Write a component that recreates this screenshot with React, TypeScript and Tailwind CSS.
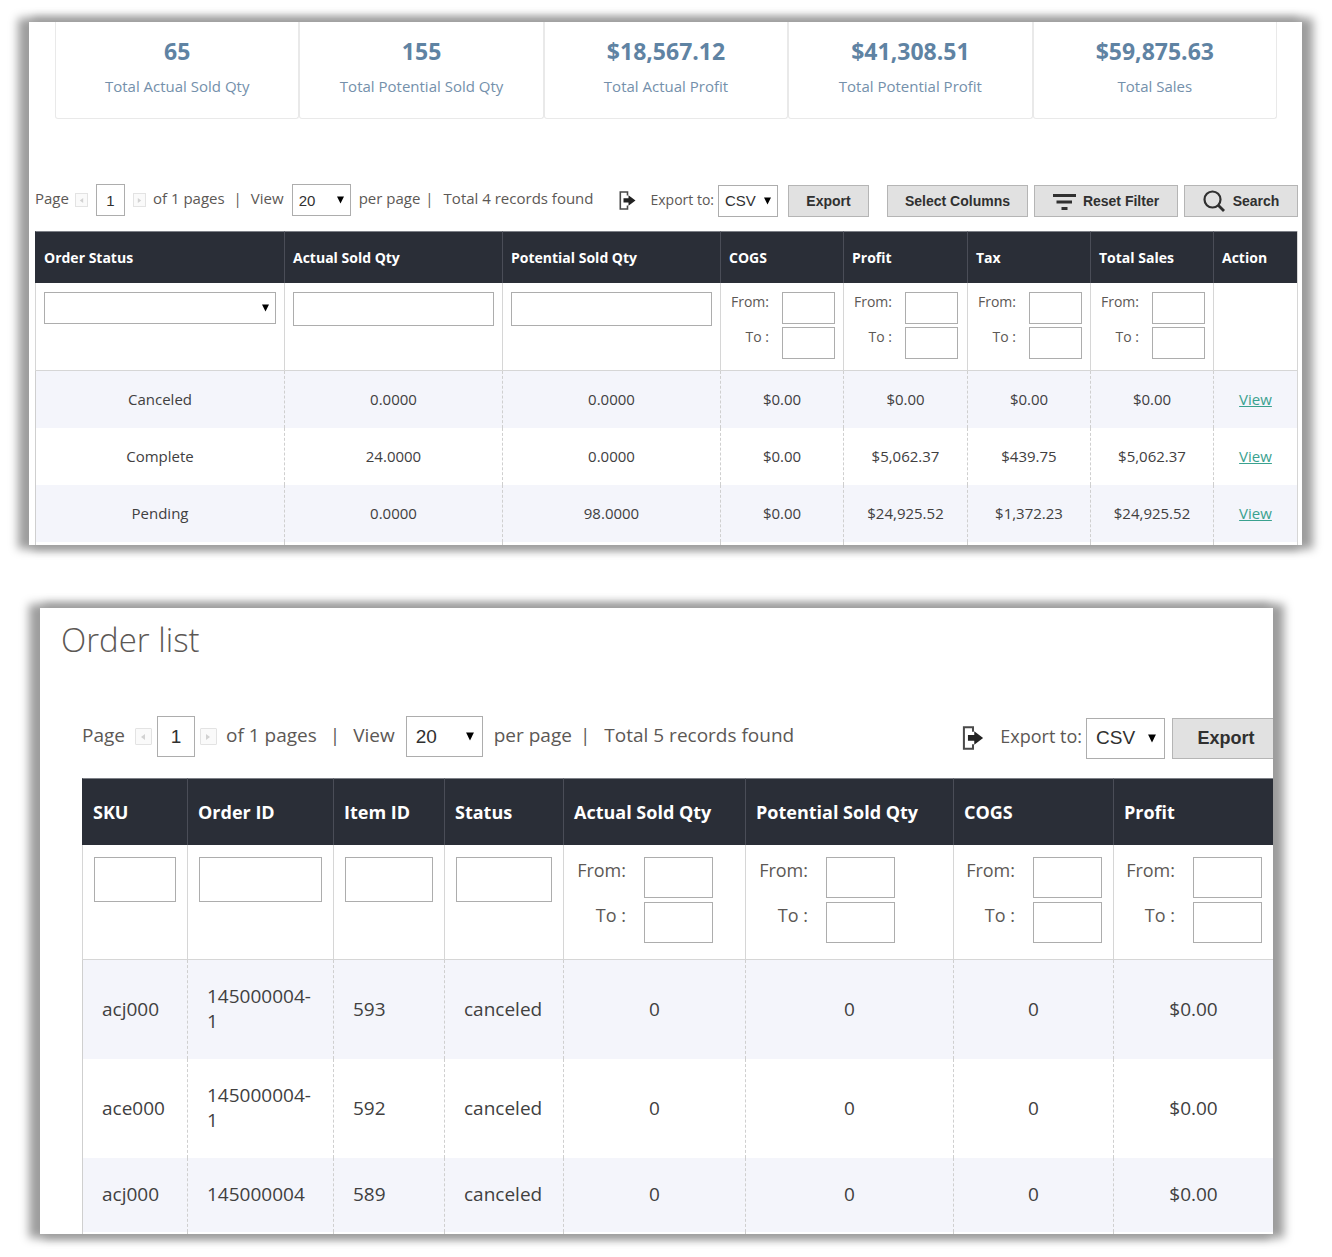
import React from "react";

type Size = "sm" | "lg";

const OPEN = "font-['Open_Sans',sans-serif]";
const ARIAL = "font-['Liberation_Sans',Arial,sans-serif]";
const PANEL =
  "overflow-hidden bg-white shadow-[-7px_0_9px_4px_#9d9d9d,7px_0_9px_4px_#9d9d9d]";

function Arrow({ size }: { size: Size }) {
  return (
    <svg
      viewBox="0 0 7 8"
      aria-hidden="true"
      className={
        size === "sm"
          ? "pointer-events-none absolute top-3 right-[7px] h-2 w-[7px]"
          : "pointer-events-none absolute top-4 right-[9px] h-[9px] w-2"
      }
    >
      <path d="M0 0.5h7L3.5 7.5z" fill="#000" />
    </svg>
  );
}

function Select({
  size,
  id,
  label,
  options,
  width,
}: {
  size: Size;
  id: string;
  label?: string;
  options: string[];
  width: string;
}) {
  return (
    <span className={`relative block ${width}`}>
      <select
        id={id}
        aria-label={label}
        className={`block w-full appearance-none border border-[#adadad] bg-white text-[#303030] ${ARIAL} ${
          size === "sm" ? "h-8 pl-1.5 text-[15px]" : "h-[41px] pl-[9px] text-[19px]"
        }`}
      >
        {options.map((o) => (
          <option key={o}>{o}</option>
        ))}
      </select>
      <Arrow size={size} />
    </span>
  );
}

function PagerButton({ size, dir }: { size: Size; dir: "prev" | "next" }) {
  return (
    <button
      type="button"
      aria-label={dir === "prev" ? "Previous page" : "Next page"}
      className={`grid shrink-0 place-items-center self-center border border-[#e3e3e3] bg-[#fafafa] ${
        size === "sm" ? "h-[14px] w-[13px]" : "h-[17px] w-[17px] rounded-[1px]"
      }`}
    >
      <svg viewBox="0 0 6 6" aria-hidden="true" className={size === "sm" ? "size-[5px]" : "size-[6px]"}>
        <path d={dir === "prev" ? "M5 0v6L1 3z" : "M1 0v6l4-3z"} fill="#d2d2d2" />
      </svg>
    </button>
  );
}

function Pager({ size, name, total }: { size: Size; name: string; total: number }) {
  const sm = size === "sm";
  return (
    <div
      className={`flex items-start whitespace-nowrap text-[#5c5855] ${OPEN} ${
        sm ? "h-8 text-[15px] leading-[29px]" : "h-[41px] text-[19px] leading-[39px]"
      }`}
    >
      <label htmlFor={`${name}-page`} className={sm ? "mr-1.5" : "mr-2.5"}>
        Page
      </label>
      <PagerButton size={size} dir="prev" />
      <input
        id={`${name}-page`}
        defaultValue="1"
        className={`border border-[#adadad] bg-white text-center text-[#303030] ${ARIAL} ${
          sm ? "mx-2 h-8 w-[29px] text-[15px]" : "mx-[5px] h-[41px] w-[38px] text-[19px]"
        }`}
      />
      <PagerButton size={size} dir="next" />
      <span className={sm ? "ml-[7px]" : "ml-[9px]"}>of 1 pages</span>
      <span className={sm ? "mx-[9px]" : "mx-[13px]"}>|</span>
      <label htmlFor={`${name}-view`} className={sm ? "mr-2" : "mr-[11px]"}>
        View
      </label>
      <Select size={size} id={`${name}-view`} options={["20", "30", "50"]} width={sm ? "w-[59px]" : "w-[77px]"} />
      <span className={sm ? "ml-2" : "ml-[11px]"}>per page</span>
      <span className={sm ? "mr-2.5 ml-[5px]" : "mr-3.5 ml-2"}>|</span>
      <span>Total {total} records found</span>
    </div>
  );
}

function ExportIcon({ size }: { size: Size }) {
  return (
    <svg viewBox="0 0 17 19" aria-hidden="true" className={size === "sm" ? "-mt-0.5 h-[19px] w-[17px]" : "-mt-0.5 h-[24px] w-[22px]"}>
      <path d="M8.500 4.500V1H1.300v17h7.200v-3.500" fill="none" stroke="#4a4a4a" strokeWidth="1.600" />
      <path d="M4.500 7.200h5V4.200l7 5.300-7 5.300v-3.200h-5z" fill="#222" />
    </svg>
  );
}

function Exporter({ size, name }: { size: Size; name: string }) {
  const sm = size === "sm";
  return (
    <div className={`flex items-center whitespace-nowrap ${sm ? "h-8" : "h-[41px]"}`}>
      <ExportIcon size={size} />
      <label
        htmlFor={`${name}-format`}
        className={`text-[#5c5855] ${OPEN} ${sm ? "mr-1 ml-3.5 pb-1 text-[14px]" : "mr-1 ml-4 pb-1 text-[18px]"}`}
      >
        Export to:
      </label>
      <Select size={size} id={`${name}-format`} options={["CSV", "XML"]} width={sm ? "w-[60px]" : "w-[79px]"} />
      <Button size={size} className={sm ? "ml-2.5 w-[81px]" : "ml-[7px] w-[108px]"}>
        Export
      </Button>
    </div>
  );
}

function Button({
  size,
  className,
  children,
}: {
  size: Size;
  className: string;
  children: React.ReactNode;
}) {
  return (
    <button
      type="button"
      className={`flex items-center justify-center whitespace-nowrap border border-[#b5b5b5] bg-[#e1e1e1] font-bold text-[#303030] ${ARIAL} ${
        size === "sm" ? "h-8 text-[14px]" : "h-[41px] text-[18px]"
      } ${className}`}
    >
      {children}
    </button>
  );
}

function TextFilter({ size, label }: { size: Size; label: string }) {
  return (
    <input
      aria-label={label}
      className={`block w-full border border-[#adadad] bg-white px-2 ${size === "sm" ? "h-[34px]" : "h-[45px]"}`}
    />
  );
}

function RangeFilter({ size, name, label }: { size: Size; name: string; label: string }) {
  const sm = size === "sm";
  const id = `${name}-${label.toLowerCase().replace(/ /g, "-")}`;
  return (
    <div className={`flex flex-col text-[#5c5855] ${OPEN} ${sm ? "gap-[3px] text-[14px]" : "gap-1 text-[18px]"}`}>
      {["From:", "To :"].map((t) => (
        <div key={t} className={sm ? "flex h-8 gap-[13px]" : "flex h-[41px] gap-[18px]"}>
          <label
            htmlFor={`${id}-${t[0]}`}
            className={sm ? "w-10 text-right leading-5" : "w-[51px] text-right leading-[27px]"}
          >
            {t}
          </label>
          <input
            id={`${id}-${t[0]}`}
            className={`border border-[#adadad] bg-white px-1 ${sm ? "w-[53px]" : "w-[69px]"}`}
          />
        </div>
      ))}
    </div>
  );
}

const STATS = [
  ["65", "Total Actual Sold Qty"],
  ["155", "Total Potential Sold Qty"],
  ["$18,567.12", "Total Actual Profit"],
  ["$41,308.51", "Total Potential Profit"],
  ["$59,875.63", "Total Sales"],
];

type Col = { title: string; width: string; filter: "select" | "text" | "range" | "none" };

const SUMMARY_COLS: Col[] = [
  { title: "Order Status", width: "w-[249px]", filter: "select" },
  { title: "Actual Sold Qty", width: "w-[218px]", filter: "text" },
  { title: "Potential Sold Qty", width: "w-[218px]", filter: "text" },
  { title: "COGS", width: "w-[123px]", filter: "range" },
  { title: "Profit", width: "w-[124px]", filter: "range" },
  { title: "Tax", width: "w-[123px]", filter: "range" },
  { title: "Total Sales", width: "w-[123px]", filter: "range" },
  { title: "Action", width: "w-[84px]", filter: "none" },
];

const SUMMARY_ROWS = [
  ["Canceled", "0.0000", "0.0000", "$0.00", "$0.00", "$0.00", "$0.00", "View"],
  ["Complete", "24.0000", "0.0000", "$0.00", "$5,062.37", "$439.75", "$5,062.37", "View"],
  ["Pending", "0.0000", "98.0000", "$0.00", "$24,925.52", "$1,372.23", "$24,925.52", "View"],
];

const ORDER_COLS: Col[] = [
  { title: "SKU", width: "w-[105px]", filter: "text" },
  { title: "Order ID", width: "w-[146px]", filter: "text" },
  { title: "Item ID", width: "w-[111px]", filter: "text" },
  { title: "Status", width: "w-[119px]", filter: "text" },
  { title: "Actual Sold Qty", width: "w-[182px]", filter: "range" },
  { title: "Potential Sold Qty", width: "w-[208px]", filter: "range" },
  { title: "COGS", width: "w-[160px]", filter: "range" },
  { title: "Profit", width: "w-[160px]", filter: "range" },
];

const ORDER_ROWS = [
  ["acj000", "145000004-1", "593", "canceled", "0", "0", "0", "$0.00"],
  ["ace000", "145000004-1", "592", "canceled", "0", "0", "0", "$0.00"],
  ["acj000", "145000004", "589", "canceled", "0", "0", "0", "$0.00"],
];

function Grid({
  size,
  name,
  cols,
  rows,
  leftCols,
  closed,
}: {
  size: Size;
  name: string;
  cols: Col[];
  rows: string[][];
  leftCols: number;
  closed: boolean;
}) {
  const sm = size === "sm";
  return (
    <table
      className={`w-full table-fixed border-separate border-spacing-0 border-[#d6d6d6] ${OPEN} ${
        closed ? "border-r" : ""
      }`}
    >
      <colgroup>
        {cols.map((c) => (
          <col key={c.title} className={c.width} />
        ))}
      </colgroup>
      <thead>
        <tr>
          {cols.map((c, i) => (
            <th
              key={c.title}
              scope="col"
              className={`whitespace-nowrap border-t border-l border-t-[#7d8087] bg-[#2a2e37] text-left font-bold text-white ${
                i === 0 ? "border-l-[#2a2e37]" : "border-l-[#4a4d57]"
              } ${sm ? "h-[52px] pl-2 text-[14px]" : "h-[67px] pl-2.5 text-[18px]"}`}
            >
              {c.title}
            </th>
          ))}
        </tr>
        <tr>
          {cols.map((c) => (
            <td
              key={c.title}
              className={`border-b border-l border-[#d6d6d6] bg-white align-top ${
                sm ? "h-[88px] px-2 pt-[9px]" : "h-[115px] px-[11px] pt-3"
              }`}
            >
              {c.filter === "select" && (
                <Select size={size} id={`${name}-status`} label={c.title} options={[""]} width="w-full" />
              )}
              {c.filter === "text" && <TextFilter size={size} label={c.title} />}
              {c.filter === "range" && <RangeFilter size={size} name={name} label={c.title} />}
            </td>
          ))}
        </tr>
      </thead>
      <tbody>
        {rows.map((r, n) => (
          <tr key={n} className={n % 2 === 0 ? "bg-[#f4f5fb]" : "bg-white"}>
            {r.map((v, i) => (
              <td
                key={i}
                className={`border-l border-[#cfcfcf] text-[#41403f] ${i === 0 ? "border-solid" : "border-dashed"} ${
                  i < leftCols ? "text-left" : "text-center"
                } ${sm ? "h-[57px] px-2 text-[15px]" : "px-[19px] pt-6 pb-[25px] text-[19px] leading-[25px]"}`}
              >
                {v === "View" ? (
                  <a href="#view" className="text-[#3aa18f] underline">
                    View
                  </a>
                ) : (
                  v
                )}
              </td>
            ))}
          </tr>
        ))}
        <tr aria-hidden="true">
          {cols.map((c, i) => (
            <td
              key={c.title}
              className={`border-l border-[#cfcfcf] ${sm ? "h-[3px]" : "h-0.5"} ${
                i === 0 ? "border-solid" : "border-dashed"
              }`}
            />
          ))}
        </tr>
      </tbody>
    </table>
  );
}

export default function App() {
  return (
    <main className="bg-white pt-[22px] pb-[23px]">
      <section aria-label="Sales summary" className={`${PANEL} mr-[30px] ml-[29px]`}>
        <dl className={`mr-[25px] ml-[26px] grid grid-cols-5 text-center ${OPEN}`}>
          {STATS.map(([value, label]) => (
            <div
              key={label}
              className="flex h-[97px] flex-col-reverse justify-end rounded-b-[3px] border border-t-0 border-[#e9e9e9] pt-3"
            >
              <dt className="mt-1.5 text-[15px] leading-6 text-[#7490ab]">{label}</dt>
              <dd className="text-[23px] leading-[34px] font-bold text-[#5f83a3]">{value}</dd>
            </div>
          ))}
        </dl>
        <div className="mt-[65px] mr-1 ml-1.5">
          <div className="mb-3.5 flex h-[33px] justify-between">
            <Pager size="sm" name="summary" total={4} />
            <div className="flex self-end">
              <Exporter size="sm" name="summary" />
              <Button size="sm" className="ml-[18px] w-[141px]">
                Select Columns
              </Button>
              <Button size="sm" className="ml-1.5 w-36 gap-[7px]">
                <svg viewBox="0 0 23 16" aria-hidden="true" className="mt-0.5 h-4 w-[23px]">
                  <path d="M0 1.500h23M3.500 8h15.500M8.500 14.500h6" stroke="#303030" strokeWidth="2.800" />
                </svg>
                Reset Filter
              </Button>
              <Button size="sm" className="ml-1.5 w-[114px] gap-2">
                <svg viewBox="0 0 22 22" aria-hidden="true" className="size-[22px]" fill="none" stroke="#303030">
                  <circle cx="9.500" cy="9.500" r="8" strokeWidth="2.200" />
                  <path d="M15 15l6 6" strokeWidth="2.800" />
                </svg>
                Search
              </Button>
            </div>
          </div>
          <Grid size="sm" name="summary" cols={SUMMARY_COLS} rows={SUMMARY_ROWS} leftCols={0} closed />
        </div>
      </section>

      <section aria-label="Order list" className={`${PANEL} mt-[63px] mr-[59px] ml-10`}>
        <h1 className={`ml-[21px] pt-2 text-[33px] leading-[48px] font-light text-[#5c5855] ${OPEN}`}>Order list</h1>
        <div className="mt-[52px] ml-[42px]">
          <div className="mb-[19px] -mr-[7px] flex h-[43px] justify-between">
            <Pager size="lg" name="orders" total={5} />
            <div className="self-end">
              <Exporter size="lg" name="orders" />
            </div>
          </div>
          <Grid size="lg" name="orders" cols={ORDER_COLS} rows={ORDER_ROWS} leftCols={4} closed={false} />
        </div>
      </section>
    </main>
  );
}
